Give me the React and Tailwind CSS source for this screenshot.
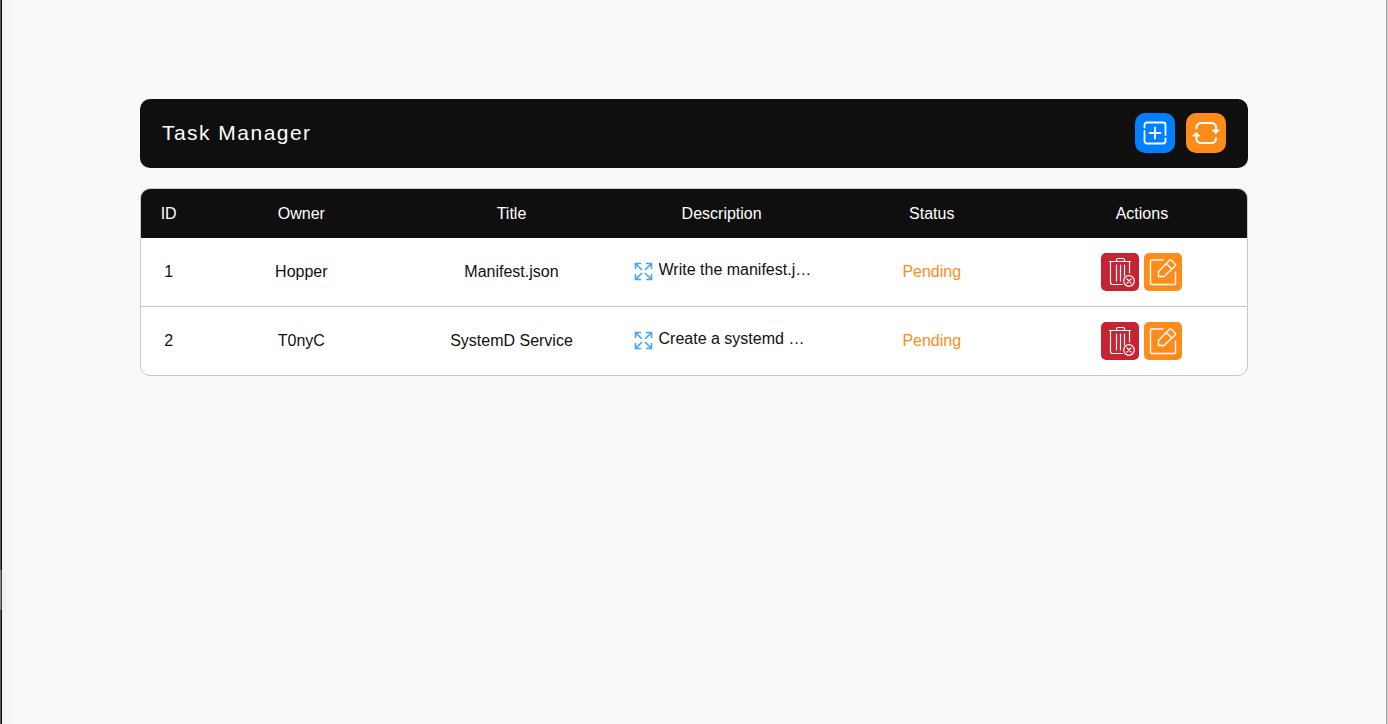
const tasks = [
  { id: 1, owner: 'Hopper', title: 'Manifest.json', description: 'Write the manifest.json file', status: 'Pending' },
  { id: 2, owner: 'T0nyC', title: 'SystemD Service', description: 'Create a systemd service', status: 'Pending' },
];

function AddIcon() {
  return (
    <svg viewBox="0 0 24 24" className="size-6" fill="none" stroke="white" strokeWidth="1.8" strokeLinecap="round" aria-hidden="true">
      <path d="M1.500 6.500V4a2.500 2.500 0 0 1 2.500-2.500h16A2.500 2.500 0 0 1 22.500 4v10M22.500 17.500V20a2.500 2.500 0 0 1-2.500 2.500H4A2.500 2.500 0 0 1 1.500 20V10" />
      <path d="M12 6.500v11M6.500 12h11" />
    </svg>
  );
}

function RefreshIcon() {
  return (
    <svg viewBox="0 0 28 28" className="size-7" fill="none" stroke="white" strokeWidth="2" strokeLinecap="round" aria-hidden="true">
      <path d="M4.500 9V8.500A4.500 4.500 0 0 1 9 4h10.500a4.500 4.500 0 0 1 4.500 4.500v3M24 19v.5a4.500 4.500 0 0 1-4.500 4.500H9a4.500 4.500 0 0 1-4.500-4.500v-3.500" />
      <path d="M20.500 11h7L24 14.500zM1 17h7l-3.500-3.500z" fill="white" stroke="white" strokeWidth="0.8" strokeLinejoin="round" />
    </svg>
  );
}

function TrashIcon() {
  return (
    <svg viewBox="0 0 30 30" className="size-[30px]" fill="none" stroke="white" strokeWidth="1.2" strokeLinecap="round" strokeLinejoin="round" aria-hidden="true">
      <path d="M4.500 4.500h21M11.500 4.500V3A1.500 1.500 0 0 1 13 1.500h5A1.500 1.500 0 0 1 19.500 3v1.500M24.500 4.500V16M5.500 4.500V25.500a2 2 0 0 0 2 2h10M11.500 8v16M15.500 8v16M19.500 8v11" />
      <circle cx="24" cy="24" r="5.3" />
      <path d="m22 22 4 4M26 22l-4 4" />
    </svg>
  );
}

function EditIcon() {
  return (
    <svg viewBox="0 0 30 30" className="size-[30px]" fill="none" stroke="white" strokeWidth="1.400" strokeLinecap="round" strokeLinejoin="round" aria-hidden="true">
      <path d="M15 3H3.500A1 1 0 0 0 2.500 4v22.500a1 1 0 0 0 1 1h23a1 1 0 0 0 1-1V15" />
      <path d="M10.500 19.500v-5L21.500 3.300a1.300 1.300 0 0 1 1.800 0l3.900 3.900a1.300 1.300 0 0 1 0 1.800L16 19.500zM18.300 6.600l5.500 5.500" />
    </svg>
  );
}

function ExpandIcon() {
  return (
    <svg viewBox="0 0 20 20" className="size-5" fill="none" stroke="#42a5f5" strokeWidth="1.600" aria-hidden="true">
      <path d="M1.500 7V1.500H7M1.500 1.500l6.500 6.500M12 1.500h5.500V7M17.500 1.500L11 8M1.500 12v5.500H7M1.500 17.500L8 11M17.500 12v5.500H12M17.500 17.500L11 11" />
    </svg>
  );
}

function WindowEdge() {
  return (
    <div className="flex w-2.5 shrink-0 bg-linear-to-r from-[#eeeeee] to-[#f7f7f7]" aria-hidden="true">
      <div className="flex w-px flex-col">
        <div className="h-[570px] bg-[#555555]" />
        <div className="h-10 bg-[#888888]" />
        <div className="grow bg-[#555555]" />
      </div>
      <div className="flex w-px flex-col">
        <div className="h-[570px] bg-[#111111]" />
        <div className="h-10 bg-[#444444]" />
        <div className="grow bg-[#111111]" />
      </div>
    </div>
  );
}

export default function App() {
  return (
    <div className="flex min-h-screen bg-[#f9f9f9] font-['Liberation_Sans',sans-serif] text-base text-[#0f0f0f]">
      <WindowEdge />
      <main className="grow px-[130px] pt-[99px]">
        <header className="flex items-center justify-between rounded-[10px] bg-[#0f0f0f] px-[22px] pt-3.5 pb-[15px]">
          <h1 className="text-[21px] leading-6 tracking-[0.07em] text-white">Task Manager</h1>
          <div className="flex gap-[11px]">
            <button aria-label="Add task" className="flex size-10 items-center justify-center rounded-[10px] bg-[#0080ff]">
              <AddIcon />
            </button>
            <button aria-label="Refresh tasks" className="flex size-10 items-center justify-center rounded-[10px] bg-[#ff8c1a]">
              <RefreshIcon />
            </button>
          </div>
        </header>

        <div className="mt-5 overflow-hidden rounded-[10px] border border-[#c8c8c8] bg-white">
          <table className="w-full table-fixed border-separate border-spacing-0 text-center">
            <thead className="bg-[#0f0f0f] text-white">
              <tr className="h-[49px]">
                <th scope="col" className="w-[5%] font-normal">ID</th>
                <th scope="col" className="w-[19%] font-normal">Owner</th>
                <th scope="col" className="w-[19%] font-normal">Title</th>
                <th scope="col" className="w-[19%] font-normal">Description</th>
                <th scope="col" className="w-[19%] font-normal">Status</th>
                <th scope="col" className="w-[19%] font-normal">Actions</th>
              </tr>
            </thead>
            <tbody>
              {tasks.map((task) => (
                <tr key={task.id} className="[&>td]:border-b [&>td]:border-[#c8c8c8] [&>td]:py-[15px] last:[&>td]:border-b-0">
                  <td>{task.id}</td>
                  <td>{task.owner}</td>
                  <td>{task.title}</td>
                  <td className="pr-[15px] pl-[17px]">
                    <div className="flex items-center gap-[5px]">
                      <button aria-label="Expand description" className="shrink-0">
                        <ExpandIcon />
                      </button>
                      <span className="w-[155px] truncate pb-1 text-left">{task.description}</span>
                    </div>
                  </td>
                  <td className="text-[#ff8c1a]">{task.status}</td>
                  <td>
                    <div className="flex justify-center gap-[5px]">
                      <button aria-label="Delete task" className="flex size-[38px] items-center justify-center rounded-[5px] bg-[#c82333]">
                        <TrashIcon />
                      </button>
                      <button aria-label="Edit task" className="flex size-[38px] items-center justify-center rounded-[5px] bg-[#ff8c1a]">
                        <EditIcon />
                      </button>
                    </div>
                  </td>
                </tr>
              ))}
            </tbody>
          </table>
        </div>
      </main>
      <div className="w-2.5 shrink-0 border-r border-[#d0d0d0]" aria-hidden="true">
        <div className="h-full border-r border-[#a0a0a0]" />
      </div>
    </div>
  );
}
